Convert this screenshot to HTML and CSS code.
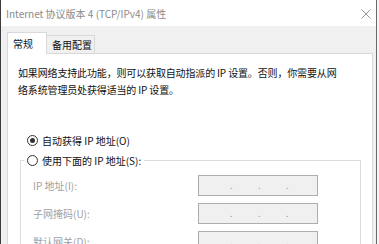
FILE: index.html
```html
<!DOCTYPE html>
<html lang="zh-CN">
<head>
<meta charset="utf-8">
<title>Internet 协议版本 4 (TCP/IPv4) 属性</title>
<link rel="stylesheet" href="styles.css">
</head>
<body>
<div class="window">
  <div class="titlebar">
    <span class="title">Internet 协议版本 4 (TCP/IPv4) 属性</span>
    <svg class="close" width="10" height="10" viewBox="0 0 10 10"><path d="M0.5 0.5 L9.5 9.5 M9.5 0.5 L0.5 9.5" stroke="#9a9a9a" stroke-width="1" fill="none"/></svg>
  </div>
  <div class="content">
    <div class="tabs">
      <div class="tab active">常规</div>
      <div class="tab">备用配置</div>
    </div>
    <div class="panel">
      <p class="desc">如果网络支持此功能，则可以获取自动指派的 IP 设置。否则，你需要从网<br>络系统管理员处获得适当的 IP 设置。</p>
      <div class="radio-row">
        <span class="radio checked"></span><span>自动获得 IP 地址(O)</span>
      </div>
      <fieldset class="group">
        <legend class="radio-row legend"><span class="radio"></span><span>使用下面的 IP 地址(S):</span></legend>
        <div class="field">
          <span class="label">IP 地址(I):</span>
          <div class="ipbox"><span>.</span><span>.</span><span>.</span></div>
        </div>
        <div class="field">
          <span class="label">子网掩码(U):</span>
          <div class="ipbox"><span>.</span><span>.</span><span>.</span></div>
        </div>
        <div class="field">
          <span class="label">默认网关(D):</span>
          <div class="ipbox"><span>.</span><span>.</span><span>.</span></div>
        </div>
      </fieldset>
    </div>
  </div>
</div>
</body>
</html>
```
FILE: styles.css
```css
html, body {
  margin: 0;
  padding: 0;
  background: #f4f4f4;
}
body {
  width: 379px;
  height: 244px;
  overflow: hidden;
  font-family: "Noto Sans CJK SC", "Noto Sans", sans-serif;
  font-size: 10px;
  color: #111;
}
.window {
  width: 375px;
  height: 244px;
  border-left: 1px solid #3c3c3c;
  border-right: 1px solid #6a6a6a;
  background: #f0f0f0;
  display: flex;
  flex-direction: column;
  overflow: hidden;
}
.titlebar {
  height: 26px;
  flex: none;
  background: #ffffff;
  display: flex;
  align-items: center;
  justify-content: space-between;
  padding: 0 5px 0 5px;
}
.title {
  color: #8a8a8a;
  line-height: 26px;
  padding-top: 1px;
}
.close {
  display: block;
  margin-top: 1px;
}
.content {
  flex: 1;
  padding: 6px 0 0 6px;
  display: flex;
  flex-direction: column;
}
.tabs {
  display: flex;
  align-items: flex-end;
  height: 21px;
}
.tab {
  box-sizing: border-box;
  height: 18px;
  line-height: 17px;
  padding-left: 5px;
  border: 1px solid #d9d9d9;
  border-bottom: none;
  background: #f0f0f0;
  width: 49px;
  margin-left: -1px;
  color: #111;
}
.tab.active {
  height: 22px;
  width: 40px;
  margin-left: 0;
  margin-bottom: -1px;
  background: #ffffff;
  line-height: 21px;
  position: relative;
  z-index: 1;
}
.panel {
  box-sizing: border-box;
  width: 366px;
  flex: 1;
  background: #ffffff;
  border: 1px solid #d9d9d9;
  padding: 10px 11px 0 10px;
}
.desc {
  margin: 0;
  line-height: 17px;
  white-space: nowrap;
  letter-spacing: -0.15px;
}
.radio-row {
  display: flex;
  align-items: center;
  height: 17px;
  line-height: 17px;
  padding-left: 9px;
  margin-top: 34px;
}
.radio {
  box-sizing: border-box;
  width: 11px;
  height: 11px;
  border: 1px solid #333333;
  border-radius: 50%;
  background: #ffffff;
  margin-right: 4px;
  display: flex;
  align-items: center;
  justify-content: center;
  flex: none;
}
.radio.checked::after {
  content: "";
  width: 5px;
  height: 5px;
  border-radius: 50%;
  background: #333333;
}
.group {
  margin: 3px 0 0 2px;
  padding: 6px 0 20px 0;
  border: 1px solid #dcdcdc;
  min-inline-size: 0;
}
.legend {
  margin: 0 0 0 3px;
  padding: 0 3px 0 3px;
}
.field {
  display: flex;
  align-items: center;
  height: 21px;
  margin-bottom: 7px;
  padding-left: 12px;
}
.label {
  width: 165px;
  color: #a0a0a0;
}
.ipbox {
  box-sizing: border-box;
  width: 120px;
  height: 21px;
  border: 1px solid #adadad;
  background: #f0f0f0;
  display: flex;
  align-items: center;
  padding-left: 31px;
  color: #9a9a9a;
  font-size: 9px;
}
.ipbox span {
  width: 28px;
  flex: none;
}
```
